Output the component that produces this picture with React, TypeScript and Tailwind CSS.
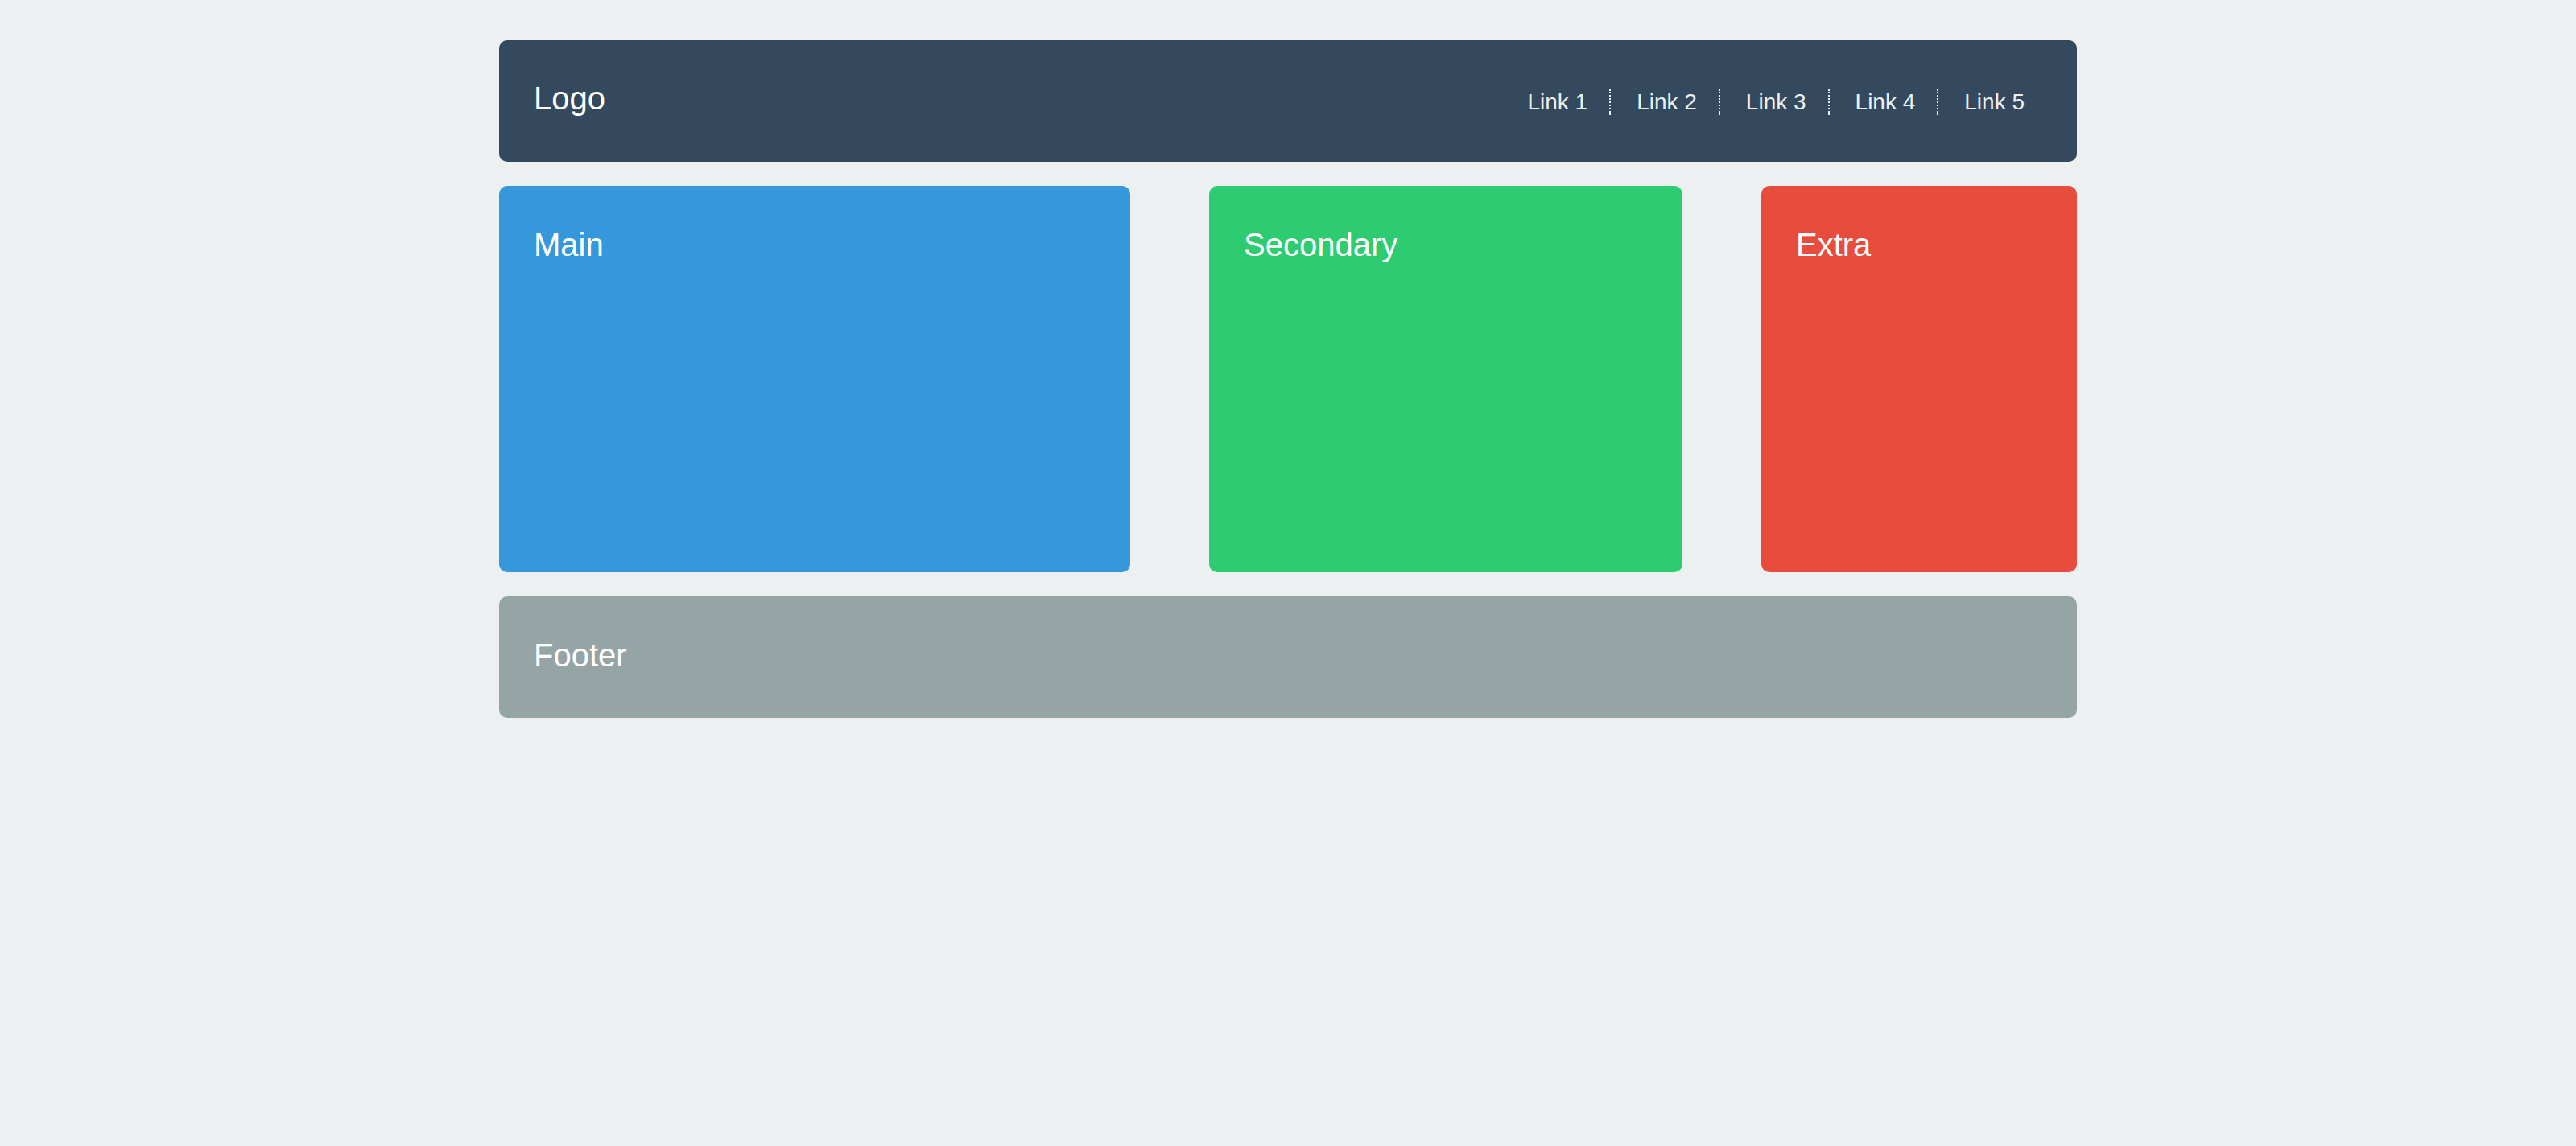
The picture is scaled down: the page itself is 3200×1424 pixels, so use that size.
import React from "react";

const links = ["Link 1", "Link 2", "Link 3", "Link 4", "Link 5"];

export default function App() {
  return (
    <div
      className="min-h-screen w-full bg-[#ecf0f1]"
      style={{ fontFamily: '"Liberation Sans", Arial, sans-serif' }}
    >
      <div className="mx-auto flex w-[1960px] flex-col gap-[30px] pt-[50px]">
        <header className="flex h-[151px] items-start justify-between rounded-[10px] bg-[#34495e] pl-[43px] pr-10">
          <div className="mt-[49px] text-[40px] leading-[46px] text-white">Logo</div>
          <nav className="mt-[61px] flex items-start">
            {links.map((l, i) => (
              <span
                key={l}
                className={
                  i === links.length - 1
                    ? "pl-[32px] pr-[25px] text-[28px] leading-[32px] text-[#ecf0f1]"
                    : "border-r-2 border-dotted border-[#ecf0f1] pl-[32px] pr-[27px] text-[28px] leading-[32px] text-[#ecf0f1]"
                }
              >
                {l}
              </span>
            ))}
          </nav>
        </header>
        <div className="grid h-[480px] grid-cols-[4fr_3fr_2fr] gap-[98px]">
          <section className="rounded-[10px] bg-[#3498db] pl-[43px] pt-[43px]">
            <h2 className="text-[40px] leading-[60px] text-white">Main</h2>
          </section>
          <section className="rounded-[10px] bg-[#2ecc71] pl-[43px] pt-[43px]">
            <h2 className="text-[40px] leading-[60px] text-white">Secondary</h2>
          </section>
          <section className="rounded-[10px] bg-[#e74c3c] pl-[43px] pt-[43px]">
            <h2 className="text-[40px] leading-[60px] text-white">Extra</h2>
          </section>
        </div>
        <footer className="h-[151px] rounded-[10px] bg-[#95a5a6] pl-[43px] pt-[43px]">
          <div className="text-[40px] leading-[60px] text-white">Footer</div>
        </footer>
      </div>
    </div>
  );
}
